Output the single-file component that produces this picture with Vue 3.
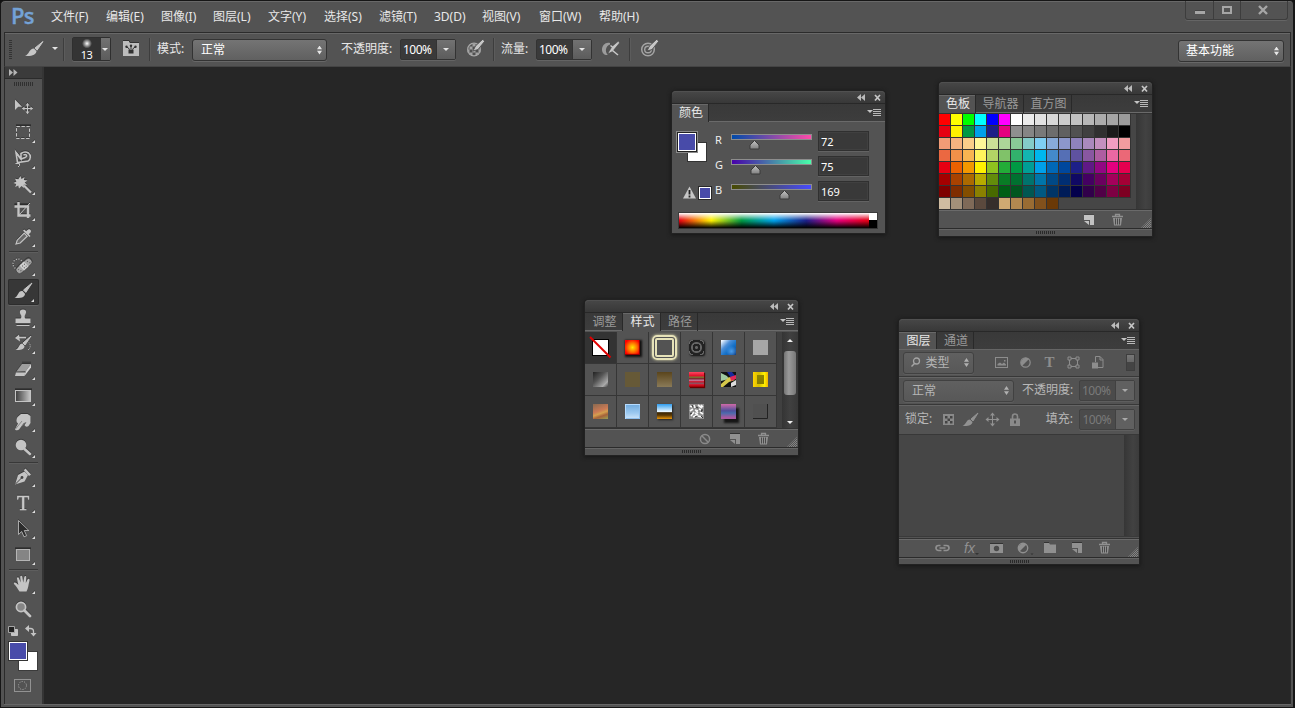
<script setup>
const menus = [
  ['文件(F)', 55], ['编辑(E)', 55], ['图像(I)', 52], ['图层(L)', 55], ['文字(Y)', 56], ['选择(S)', 55],
  ['滤镜(T)', 55], ['3D(D)', 48], ['视图(V)', 57], ['窗口(W)', 60], ['帮助(H)', 60],
]

const C = '#c4c4c4'
const toolIcons = {
  move: `<path d="M5 5.5V16l3.2-3.2H12z" fill="${C}"/><path d="M17.5 9.5v10M12.5 14.5h10" stroke="${C}" stroke-width="1"/><path d="M15.5 11.5l2-2.5 2 2.5zM15.5 17.5l2 2.5 2-2.5zM14.5 12.5l-2.5 2 2.5 2zM20.5 12.5l2.5 2-2.5 2z" fill="${C}"/>`,
  marquee: `<path d="M6 5.5h15" stroke="#2d2d2d"/><rect x="6.5" y="6.5" width="13" height="12" fill="none" stroke="${C}" stroke-dasharray="3.4 1.6"/>`,
  lasso: `<path d="M6 6.5l1.500 10L18 15c3-1.500 3-6 .5-8-2.500-1.500-5.500-1-7.500.5V13z" fill="none" stroke="${C}" stroke-width="1.600"/><path d="M11 13l-5-6.500M13.500 9c3-1.500 4.500 1.500 1.500 2.500l-4 1.500" fill="none" stroke="${C}" stroke-width="1.500"/><path d="M5.500 17.500h4v2l-1.500 1.500" fill="none" stroke="${C}"/>`,
  wand: `<path d="M10.500 4l1 3 3-2-.6 3 3.600.4-2.800 2.100 2.300 2.300-3.200-.1.200 3.200-2.500-2L9 16.500l-.8-3-3 1.500 1-3L3.500 11 6.400 9.500 5 6.700l3.300.5z" fill="${C}"/><path d="M14 13.500l7 7" stroke="${C}" stroke-width="2.200"/>`,
  crop: `<path d="M8.500 4v13.500h12M4.500 8.500h13.500V20" fill="none" stroke="${C}" stroke-width="2.400"/><path d="M9 17L20 5" stroke="${C}"/><path d="M4.500 6.500H7M10 6.500h8" stroke="#2d2d2d"/>`,
  eyedropper: `<path d="M6 20l1.200-3.800 7-7 3 3-7 6.800z" fill="#686868" stroke="${C}" stroke-width="1.200"/><path d="M13 6.500l6.500 6.500 1-1-1.700-1.900c2.500-2 2.500-3 1.800-4.100s-2.300-1.200-4.400 1.200L14.200 5.500z" fill="${C}"/>`,
  heal: `<circle cx="8" cy="11" r="5" fill="none" stroke="${C}" stroke-width="1.200" stroke-dasharray="1 1.600"/><g transform="rotate(-42 14 13)"><rect x="4.500" y="9.500" width="19" height="7" rx="3.400" fill="#a4a4a4" stroke="#2f2f2f" stroke-width=".6"/><rect x="11" y="9.500" width="6" height="7" fill="#d0d0d0"/><path d="M12.500 12h1m1.500 0h1m-3.500 2.500h1m1.500 0h1M7 12h1m1 2.500H8M19 12h1m1 2.500h-1" stroke="#555"/></g>`,
  brush: `<path d="M22 4l-8.500 7 2.300 2.400z" fill="${C}" stroke="${C}"/><path d="M12.500 12l2.500 2.700c0 3-3 4.800-10.500 4.300 4-1.700 3.300-7.500 8-7z" fill="${C}"/>`,
  stamp: `<path d="M13 4.500c-4 0-3.500 3.500-2 5.500.5 1 .5 3-.5 3.500H5.500v4.500h15v-4.500h-5c-1-.5-1-2.500-.5-3.500 1.500-2 2-5.500-2-5.500z" fill="${C}"/><path d="M6.500 20.500h13" stroke="${C}"/>`,
  history: `<path d="M21 5l-8 7 2 2z" fill="${C}" stroke="${C}"/><path d="M12.500 12.500l2 2.500c0 3-3 4.300-9 4 4-1.500 3-6.500 7-6.500z" fill="${C}"/><path d="M16 6.500H9" stroke="${C}" stroke-width="1.600"/><path d="M9 3.500L5 7l5 3.500z" fill="${C}"/><path d="M18 19c2.500-2 3-5 1-7.500" fill="none" stroke="${C}" stroke-dasharray="1 1"/>`,
  eraser: `<path d="M6 15l6-8h9l-5.500 7.500z" fill="#9e9e9e"/><path d="M6 15h9.500L14.500 19H5z" fill="#c4c4c4"/><path d="M15.500 14.500L21 7v3.500L14.500 19z" fill="#d4d4d4"/><path d="M12 6h9M6 15l9.500 0" stroke="#333" stroke-width=".8"/>`,
  gradient: `<path d="M5 6.500h17" stroke="#2d2d2d"/><rect x="5.500" y="7.500" width="15" height="11" fill="url(#toolRamp)" stroke="${C}"/>`,
  smudge: `<path d="M5 20l3-5.500C6 13 6 10.500 7.500 8L11 5h6.500l3 2v7l-2 3c-2 1.500-3 .5-4-1l2-3-3 1.500L9 20.500c-1 1.300-4 1-4-.5z" fill="${C}"/><path d="M12 12l-6.500 8M15 13.500L12 17" stroke="#777" stroke-width=".8"/>`,
  dodge: `<circle cx="11" cy="10" r="5.300" fill="${C}"/><path d="M14.500 14l5.500 5" stroke="${C}" stroke-width="2.500" stroke-linecap="round"/>`,
  pen: `<path d="M5 20.500l3-9.500 6.500-3.500L18 11l-3.500 6.500z" fill="${C}"/><path d="M5.500 20l6.500-6.500" stroke="#444"/><circle cx="12" cy="13.500" r="1.400" fill="#444"/><path d="M15.500 4.500l5.500 6-2 1.500-5.200-5.700z" fill="${C}"/>`,
  arrow: `<path d="M8.500 4.500v14l3.200-3 2.300 5.300 2.700-1.100-2.400-5.200h4.600z" fill="#2c2c2c" stroke="#b8b8b8" stroke-width=".9"/>`,
  rect: `<path d="M5 6.500h16" stroke="#2d2d2d"/><rect x="6.500" y="7.500" width="13" height="11" fill="#858585" stroke="#b5b5b5"/>`,
  hand: `<path d="M9.500 20.500c-2-2.500-3-5.500-5.500-7.500-.6-1.500 1.200-1.900 2.600-.7l1.800 1.600L7 7.700c-.2-1.700 1.600-2 2-.5l1.700 4.300-.5-5.500c0-1.800 2-1.800 2.200 0l.8 5.500 1-5.300c.4-1.600 2.200-1.400 2 .4l-.4 5.400 1.700-3.500c.8-1.400 2.400-.7 2 .9-1 4-1 7-3 11z" fill="${C}"/>`,
  zoom: `<circle cx="11" cy="10" r="4.600" fill="#858585" stroke="${C}" stroke-width="1.700"/><path d="M14.500 13.500l5.500 5.500" stroke="${C}" stroke-width="2.800" stroke-linecap="round"/>`,
}
const groups = [
  ['move', 'marquee', 'lasso', 'wand', 'crop', 'eyedropper'],
  ['heal', 'brush', 'stamp', 'history', 'eraser', 'gradient', 'smudge', 'dodge'],
  ['pen', 'type', 'arrow', 'rect'],
  ['hand', 'zoom'],
]
const hasFlyout = (t) => t !== 'move' && t !== 'zoom'

const channels = [
  { n: 'R', v: 72, from: '#004ba9', to: '#ff4ba9' },
  { n: 'G', v: 75, from: '#4800a9', to: '#48ffa9' },
  { n: 'B', v: 169, from: '#484b00', to: '#484bff' },
]
const swatches = `
ff0000 ffff00 00ff00 00ffff 0000ff ff00ff ffffff ebebeb e1e1e1 d7d7d7 cccccc c2c2c2 b7b7b7 acacac a5a5a5 9b9b9b
e60012 fff100 009944 00a0e9 1d2088 e4007f 8f8f8f 858585 797979 6d6d6d 606060 515151 404040 303030 1a1a1a 000000
f29b76 f6b37f facd89 fff799 cce198 acd598 89c997 84ccc9 7ecef4 88abda 8c97cb 8f82bc aa89bd c490bf f19ec2 f29c9f
eb6841 f19149 f8b551 fff45c b3d465 80c269 32b16c 13b5b1 00b7ee 448aca 556fb5 5f52a0 8957a1 ae5da1 ea68a2 eb6877
e60012 eb6100 f39800 fff100 8fc31f 22ac38 009944 009e96 00a0e9 0068b7 00479d 1d2088 601986 920783 e4007f e5004f
a40000 a84200 ac6a00 b7aa00 638c0b 097c25 007130 00736d 0075a9 004986 002e73 100964 440062 6a005f a4005b a40035
7d0000 7f2d00 834e00 8a8000 486a00 005e15 00561f 005752 005982 003567 001c58 03004c 31004a 500047 7e0043 7d0022
cfbca1 a39079 7f6a58 5b493d 362e2b cfa972 b28850 996c33 81511c 6a3906`.trim().split(/\s+/)

const footerIcons = {
  link: '<path d="M6.500 5.500h-2a2.500 2.500 0 0 0 0 5h3M9.500 5.500h3a2.500 2.500 0 0 1 0 5h-3M5.500 8h6" fill="none" stroke="#909090" stroke-width="1.700"/>',
  mask: '<path d="M2 3.500h13" stroke="#333"/><path d="M2 4h13v9H2z" fill="#909090"/><circle cx="8.500" cy="8.500" r="2.700" fill="#4a4a4a"/>',
  adjust: '<circle cx="8" cy="8" r="4.700" fill="none" stroke="#909090" stroke-width="1.400"/><path d="M4.500 11.500l7-7a5 5 0 0 0-7 7z" fill="#909090"/><path d="M15.500 13.500h3l-1.500 1.500z" fill="#333"/>',
  folder: '<path d="M2 3h5l1 1.500h6V13H2z" fill="#909090"/><path d="M2 2.500h5" stroke="#333"/>',
  page: '<path d="M3 3h10v10H9V8H3z" fill="#909090"/><path d="M3 9h5v4z" fill="#909090"/><path d="M3 2.500h10" stroke="#333"/>',
  trash: '<path d="M3 4.500h11M6.500 4V2.500h4V4" fill="none" stroke="#909090" stroke-width="1.300"/><path d="M4 6h9l-1 7.500H5z" fill="#909090"/><path d="M6.500 6.500v6M8.500 6.500v6M10.500 6.500v6" stroke="#4a4a4a"/>',
  none: '<circle cx="8" cy="8" r="4.600" fill="none" stroke="#8a8a8a" stroke-width="1.500"/><path d="M4.800 4.800l6.400 6.400" stroke="#8a8a8a" stroke-width="1.500"/>',
}
const filters = {
  image: '<rect x="1.500" y="2.500" width="12" height="10" fill="none" stroke="#8d8d8d"/><path d="M3.500 10.500V9L6 7.500l2 1.500 2-1.500 2 2v1z" fill="#8d8d8d"/><path d="M10 5h1.500v1.500H10z" fill="#8d8d8d"/>',
  adjust: '<circle cx="7.500" cy="7.500" r="4.700" fill="none" stroke="#8d8d8d" stroke-width="1.200"/><path d="M4 11l7-7a5 5 0 0 0-7 7z" fill="#8d8d8d"/>',
  type: '',
  shape: '<rect x="3.500" y="3.500" width="8" height="8" fill="none" stroke="#8d8d8d"/><path d="M2 2h3v3H2zM10 2h3v3h-3zM2 10h3v3H2zM10 10h3v3h-3z" fill="#555" stroke="#8d8d8d"/>',
  smart: '<path d="M5.500 7V1.500H10l3 3v8H8" fill="none" stroke="#8d8d8d"/><path d="M10 1.500v3.500h3" fill="none" stroke="#8d8d8d"/><path d="M2 7.500h6v6H2z" fill="#8d8d8d"/>',
}
const layersIcons = ['link', 'fx', 'mask', 'adjust', 'folder', 'page', 'trash']
</script>

<template>
  <div class="app">
    <svg class="defs" width="0" height="0">
      <defs>
        <linearGradient id="toolRamp"><stop offset="0" stop-color="#3c3c3c" /><stop offset="1" stop-color="#c8c8c8" /></linearGradient>
        <radialGradient id="spray"><stop offset="0" stop-color="#fff" /><stop offset=".4" stop-color="#aaa" /><stop offset="1" stop-color="#343434" /></radialGradient>
        <linearGradient id="thumb" x2="0" y2="1"><stop offset="0" stop-color="#c4c4c4" /><stop offset="1" stop-color="#808080" /></linearGradient>
      </defs>
    </svg>

    <header class="menubar">
      <span class="logo">Ps</span>
      <nav class="menus">
        <span v-for="[m, w] in menus" :key="m" :style="{ width: w + 'px' }">{{ m }}</span>
      </nav>
      <div class="winctl">
        <span class="min"><i></i></span>
        <span class="max"><i></i></span>
        <span class="close"><svg width="12" height="10"><path d="M2 1l8 8M10 1L2 9" stroke="#a6a6a6" stroke-width="2.400" /></svg></span>
      </div>
    </header>

    <section class="options">
      <i class="grip-v"></i>
      <svg class="o-brush" width="20" height="18"><path d="M18 1.500L10 8l2 2.200z" fill="#c6c6c6" stroke="#c6c6c6" /><path d="M9 8.500l2.500 2.700C11 14.500 7.500 16.500 0 16c4.500-1.700 4-7.500 9-7.500z" fill="#c6c6c6" /></svg>
      <i class="caret first"></i>
      <i class="vsep s1"></i>
      <div class="preset">
        <div class="preview"><svg width="12" height="11"><circle cx="6" cy="5.500" r="5" fill="url(#spray)" /></svg><b>13</b></div>
        <div class="drop"><i class="caret"></i></div>
      </div>
      <svg class="o-panel" width="17" height="17"><path d="M0 1h6l1 2h9v13H0z" fill="#bdbdbd" /><path d="M0 .5h6l1 2h9" fill="none" stroke="#333" /><path d="M3.500 7l2 1 1.500 3M8 6v5M12.500 7l-2 1L9 11" stroke="#333" fill="none" /><circle cx="8" cy="5.800" r="1.200" fill="#333" /><circle cx="3.500" cy="6.700" r="1.200" fill="#333" /><circle cx="12.500" cy="6.700" r="1.200" fill="#333" /><path d="M5.500 10h5v3.500h-5z" fill="#333" /></svg>
      <i class="vsep s2"></i>
      <span class="lbl l1">模式:</span>
      <div class="select mode"><span>正常</span><i class="updown"></i></div>
      <span class="lbl l2">不透明度:</span>
      <div class="field"><span>100%</span><div class="drop"><i class="caret"></i></div></div>
      <svg class="o-i1" width="20" height="20">
        <circle cx="8" cy="11.500" r="6.300" fill="#505050" stroke="#a6a6a6" stroke-width="1.300" />
        <path d="M6.500 5.500h3v3h-3zM3.500 8.500h3v3h-3zM9.500 8.500h3v3h-3zM6.500 11.500h3v3h-3zM1.500 11.500h2v3h-2zM12.500 11.500h2v3h-2zM3.500 14.500h3v2.500h-3zM9.500 14.500h3v2.500h-3z" fill="#a2a2a2" />
        <path d="M17 1L9.500 8 7 13l5-1.500 6.500-8z" fill="#c6c6c6" stroke="#484848" stroke-width=".8" />
      </svg>
      <i class="vsep s3"></i>
      <span class="lbl l3">流量:</span>
      <div class="field"><span>100%</span><div class="drop"><i class="caret"></i></div></div>
      <svg class="o-i2" width="20" height="20">
        <path d="M9 4C5 2.500 1 6 1 10.500c0 3.500 2.500 6 6 5.500C3.500 13 4.500 7 9 5.500z" fill="#9c9c9c" />
        <path d="M17.500 2L11 7.500 6.500 15l5-2.500 7-8.500z" fill="#c6c6c6" stroke="#484848" stroke-width=".6" /><path d="M11.500 11.500L17 16M9.500 6.500l2.500 2" stroke="#c6c6c6" stroke-width="1.600" />
      </svg>
      <i class="vsep s4"></i>
      <svg class="o-i3" width="20" height="20">
        <circle cx="8" cy="11.500" r="6.300" fill="none" stroke="#a4a4a4" stroke-width="1.500" /><circle cx="8" cy="11.500" r="3.300" fill="none" stroke="#a4a4a4" stroke-width="1.400" />
        <path d="M17 1L9.500 8 7 13l5-1.500 6.500-8z" fill="#c6c6c6" stroke="#484848" stroke-width=".8" />
      </svg>
      <div class="select workspace"><span>基本功能</span><i class="updown"></i></div>
    </section>

    <main class="desk">
      <aside class="toolbox">
        <div class="tb-head"><svg width="9" height="7"><path d="M0 0l4 3.500L0 7zM4.500 0l4 3.500-4 3.500z" fill="#b5b5b5" /></svg></div>
        <i class="grip-h"></i>
        <div v-for="(g, gi) in groups" :key="gi" class="group">
          <div v-for="t in g" :key="t" class="tool" :class="{ active: t === 'brush' }">
            <b v-if="t === 'type'" class="glyph">T</b>
            <svg v-else width="26" height="26" v-html="toolIcons[t]"></svg>
            <i v-if="hasFlyout(t)" class="fly"></i>
          </div>
        </div>
        <div class="mini">
          <svg width="12" height="12"><path d="M4.500 4.500h6v6h-6z" fill="#c4c4c4" stroke="#c4c4c4" /><path d="M1.500 1.500h6v6h-6z" fill="#222" stroke="#a5a5a5" /></svg>
          <svg width="12" height="12"><path d="M3 3.500h2.500q3 0 3 3V9" fill="none" stroke="#c4c4c4" stroke-width="1.300" /><path d="M4 0v7L0 3.500zM5.500 8h6L8.500 11.500z" fill="#c4c4c4" /></svg>
        </div>
        <div class="fgbg"><i class="bg"></i><i class="fg"></i></div>
        <svg class="quick" width="18" height="14"><rect x=".5" y=".5" width="16" height="12" fill="none" stroke="#929292" /><circle cx="8.500" cy="6.500" r="4" fill="none" stroke="#a8a8a8" stroke-dasharray="1.100 1.400" /></svg>
      </aside>

      <!-- Color -->
      <section class="panel p-color">
        <div class="p-head"><svg width="25" height="8"><path d="M4 0v7L0 3.500zM8 0v7L4 3.500z" fill="#bbb" /><path d="M18 1l5 5.500M23 1l-5 5.500" stroke="#c6c6c6" stroke-width="1.700" /></svg></div>
        <div class="tabs"><span class="on w36">颜色</span><i class="pmenu"></i></div>
        <div class="c-body">
          <div class="c-main">
            <div class="c-left">
              <div class="c-sw"><i class="bg"></i><i class="fg"></i></div>
              <div class="warn"><svg width="13" height="13"><path d="M6.500.5L13 12.500H0z" fill="#c6c6c6" /><path d="M6.500 4v4.500M6.500 9.500v2" stroke="#222" stroke-width="1.800" /></svg><i></i></div>
            </div>
            <div class="c-rows">
              <div v-for="c in channels" :key="c.n" class="c-row">
                <span>{{ c.n }}</span>
                <div class="track">
                  <i class="ramp" :style="{ background: `linear-gradient(90deg, ${c.from}, ${c.to})` }"></i>
                  <svg width="11" height="10" :style="{ marginLeft: Math.round((c.v / 255) * 79) - 4 + 'px' }"><path d="M5.500 .5l4.500 4.500v4H1V5z" fill="url(#thumb)" stroke="#3a3a3a" /></svg>
                </div>
                <b>{{ c.v }}</b>
              </div>
            </div>
          </div>
          <div class="spectrum"><div class="hues"></div><div class="bw"></div></div>
        </div>
      </section>

      <!-- Swatches -->
      <section class="panel p-swatch">
        <div class="p-head"><svg width="25" height="8"><path d="M4 0v7L0 3.500zM8 0v7L4 3.500z" fill="#bbb" /><path d="M18 1l5 5.500M23 1l-5 5.500" stroke="#c6c6c6" stroke-width="1.700" /></svg></div>
        <div class="tabs"><span class="on w36">色板</span><span class="w48">导航器</span><span class="w48">直方图</span><i class="pmenu"></i></div>
        <div class="s-body">
          <div class="s-grid"><i v-for="(s, i) in swatches" :key="i" :style="{ background: '#' + s }"></i></div>
          <i class="rail"></i>
        </div>
        <div class="p-foot">
          <svg class="lit" width="17" height="16" v-html="footerIcons.page"></svg>
          <svg class="gap12" width="17" height="16" v-html="footerIcons.trash"></svg>
          <i class="resize"></i>
        </div>
        <div class="p-bar"><i></i></div>
      </section>

      <!-- Styles -->
      <section class="panel p-style">
        <div class="p-head"><svg width="25" height="8"><path d="M4 0v7L0 3.500zM8 0v7L4 3.500z" fill="#bbb" /><path d="M18 1l5 5.500M23 1l-5 5.500" stroke="#c6c6c6" stroke-width="1.700" /></svg></div>
        <div class="tabs"><span class="w37">调整</span><span class="on w37">样式</span><span class="w36">路径</span><i class="pmenu"></i></div>
        <div class="y-body">
          <div class="y-grid">
            <div v-for="n in 18" :key="n" :class="{ dark: n === 1 }">
              <svg v-if="n === 1" width="23" height="23"><rect x="3.500" y="3.500" width="16" height="16" fill="#fff" stroke="#000" /><path d="M1 1l20.500 20.500" stroke="#e00000" stroke-width="2" /></svg>
              <svg v-else-if="n === 18" width="17" height="17"><path d="M1 1h14v14H1z" fill="#505050" /><path d="M15.500 1v14.500H1" fill="none" stroke="#222" /></svg>
              <svg v-else-if="n === 11" width="15" height="15"><path d="M0 0h15v15H0z" fill="#111" /><path d="M0 1l6 3 2 3-8 2z" fill="#9fc9a0" /><path d="M6 0h5l4 5-5 1z" fill="#182a9c" /><path d="M0 12l8-7 6 3-6 2-6 5H0z" fill="#d6c84b" /><path d="M9 5l6-2v4l-5 2z" fill="#e02858" /><path d="M10 11l5-3v5l-5 2z" fill="#ddd" /></svg>
              <svg v-else-if="n === 16" width="15" height="15"><path d="M0 0h15v15H0z" fill="#8b8b8b" /><path d="M1 2l2 1M5 1l1 3M9 1l4 3M12 1l2 2M1 7l3-2M6 6l3 1M2 12l3-4M4 13l4-2M9 12l4 1M11 8l3 2M6 9l3 2M10 5l2 1M7 7l2 2" stroke="#f8f8f8" stroke-width="1.600" /><path d="M3 1l1 2M7 3l2 1M1 10l2-1M6 13l2-1M12 8l1-2M13 5v2M12 12l2 2" stroke="#333" /></svg>
              <i v-else :class="'t' + n"></i>
            </div>
          </div>
          <div class="scroll"><i class="up"></i><i class="knob"></i><i class="down"></i></div>
        </div>
        <div class="p-foot">
          <svg width="17" height="16" v-html="footerIcons.none"></svg>
          <svg class="gap14" width="17" height="16" v-html="footerIcons.page"></svg>
          <svg class="gap12" width="17" height="16" v-html="footerIcons.trash"></svg>
          <i class="resize"></i>
        </div>
        <div class="p-bar"><i></i></div>
      </section>

      <!-- Layers -->
      <section class="panel p-layer">
        <div class="p-head"><svg width="25" height="8"><path d="M4 0v7L0 3.500zM8 0v7L4 3.500z" fill="#bbb" /><path d="M18 1l5 5.500M23 1l-5 5.500" stroke="#c6c6c6" stroke-width="1.700" /></svg></div>
        <div class="tabs"><span class="on w37">图层</span><span class="w36">通道</span><i class="pmenu"></i></div>
        <div class="l-row r1">
          <div class="select dim kind"><svg width="11" height="11"><circle cx="6.500" cy="4" r="3" fill="none" stroke="#a4a4a4" stroke-width="1.300" /><path d="M4.500 6.500L1.500 9.500" stroke="#a4a4a4" stroke-width="1.500" /></svg><span>类型</span><i class="updown"></i></div>
          <div class="filters">
            <template v-for="(p, k) in filters" :key="k">
              <b v-if="k === 'type'">T</b>
              <svg v-else width="15" height="15" v-html="p"></svg>
            </template>
          </div>
          <i class="toggle"></i>
        </div>
        <div class="l-row">
          <div class="select dim blend"><span>正常</span><i class="updown"></i></div>
          <span class="lbl">不透明度:</span>
          <div class="field dim"><span>100%</span><div class="drop"><i class="caret"></i></div></div>
        </div>
        <div class="l-row r3">
          <span class="lbl lock">锁定:</span>
          <svg class="locks" width="95" height="18">
            <path d="M1 3h11v11H1z" fill="#8a8a8a" /><path d="M3 5h2.500v2.500H3zM8 5h2.500v2.500H8zM5.500 7.500H8V10H5.500zM3 10h2.500v2.500H3zM8 10h2.500v2.500H8z" fill="#444" />
            <path d="M36 2l-7 6 2 2z" fill="#929292" stroke="#929292" /><path d="M28 8.500l2.500 2.500c-.5 3-4 4.500-10 4 4-1.500 3.500-6.500 7.500-6.500z" fill="#929292" />
            <path d="M50.500 3v11M45 8.500h11" stroke="#929292" /><path d="M48 4.500L50.500 1.500 53 4.500zM48 12.500l2.500 3 2.500-3zM46.500 6l-3 2.500 3 2.500zM54.500 6l3 2.500-3 2.500z" fill="#929292" />
            <path d="M70.500 8V5.500a2.500 2.500 0 0 1 5 0V8" fill="none" stroke="#8a8a8a" stroke-width="1.600" /><path d="M68 7.500h10V15H68z" fill="#8a8a8a" /><path d="M73 9.500v3" stroke="#444" stroke-width="1.600" />
          </svg>
          <span class="lbl fill">填充:</span>
          <div class="field dim"><span>100%</span><div class="drop"><i class="caret"></i></div></div>
        </div>
        <div class="l-list"><i class="rail"></i></div>
        <div class="p-foot l-foot">
          <template v-for="k in layersIcons" :key="k">
            <span v-if="k === 'fx'" class="fx">fx<svg width="4" height="3"><path d="M0 0h4L2 2z" fill="#333" /></svg></span>
            <svg v-else width="17" height="16" v-html="footerIcons[k]"></svg>
          </template>
          <i class="resize"></i>
        </div>
        <div class="p-bar"><i></i></div>
      </section>
    </main>
  </div>
</template>

<style>
body { background: #535353; overflow: hidden; }
</style>

<style scoped>
.app { box-sizing: border-box; width: 1295px; height: 708px; background: #535353; border: 1px solid #161616; border-right-width: 2px; border-radius: 5px 5px 0 0; box-shadow: inset 0 1px #686868, 0 0 0 5px #111; font: 12px/14px "Noto Sans", "Noto Sans CJK SC", sans-serif; color: #e4e4e4; overflow: hidden; display: flex; flex-direction: column; }
.app * { box-sizing: border-box; }
.app i { display: block; font-style: normal; flex: none; }
.app svg { display: block; flex: none; }
.app .defs { position: absolute; }

.menubar { height: 31px; display: flex; flex: none; }
.logo { width: 50px; padding-left: 10px; font: 600 22px/28px "Open Sans", sans-serif; color: #74a2d6; letter-spacing: -.8px; -webkit-text-stroke: .3px #74a2d6; }
.menus { display: flex; flex: 1; font-size: 12px; line-height: 32px; color: #e8e8e8; white-space: nowrap; }
.winctl { width: 103px; height: 19px; margin-right: 5px; border: 1px solid #3d3d3d; border-top: 0; border-radius: 0 0 3px 3px; display: flex; box-shadow: 0 1px #656565; }
.winctl span { display: flex; align-items: center; justify-content: center; }
.winctl span + span { border-left: 1px solid #3d3d3d; }
.min { width: 27px; }
.max { width: 27px; }
.close { flex: 1; padding-right: 2px; }
.min i { width: 10px; height: 4px; background: #a6a6a6; margin-top: 4px; border-top: 1px solid #444; }
.max i { width: 10px; height: 8px; border: 2px solid #a6a6a6; }

.options { height: 35px; flex: none; margin: 0 2px 0 3px; border: 1px solid #2b2b2b; border-bottom-color: #444; box-shadow: inset 0 1px #686868; display: flex; align-items: flex-start; padding-top: 5px; }
.grip-v { width: 3px; height: 19px; margin: 2px 0 0 4px; background: repeating-linear-gradient(#333 0 1px, transparent 1px 2px); }
.o-brush { margin: 2px 0 0 13px; }
.caret { width: 0; height: 0; border: 3px solid transparent; border-top-color: #e4e4e4; border-bottom: 0; }
.caret.first { margin: 9px 0 0 7px; }
.vsep { width: 1px; height: 23px; background: #3d3d3d; box-shadow: 1px 0 #5c5c5c; }
.s1 { margin-left: 5px; }
.preset { display: flex; margin: -1px 0 0 8px; height: 24px; width: 39px; border: 1px solid #2f2f2f; border-radius: 2px; box-shadow: 0 1px #646464; }
.preview { width: 27px; background: #343434; display: flex; flex-direction: column; align-items: center; }
.preview b { font: 11px/11px "Noto Sans", sans-serif; color: #fff; letter-spacing: -.5px; }
.drop { flex: 1; background: linear-gradient(#727272, #5c5c5c); border-left: 1px solid #333; display: flex; align-items: center; justify-content: center; }
.preset .drop { padding-right: 1px; }
.o-panel { margin: 2px 0 0 12px; }
.s2 { margin-left: 9px; }
.lbl { white-space: nowrap; color: #e8e8e8; line-height: 22px; }
.l1 { margin-left: 7px; width: 34px; }
.select { height: 22px; border: 1px solid #333; border-radius: 3px; background: linear-gradient(#747474, #606060); box-shadow: 0 1px #676767; display: flex; align-items: center; justify-content: space-between; padding: 0 4px 0 8px; color: #fff; }
.options .select { margin-top: 1px; }
.updown { width: 5px; height: 9px; background: linear-gradient(#e6e6e6, #e6e6e6); clip-path: polygon(50% 0, 100% 42%, 0 42%, 0 58%, 100% 58%, 50% 100%, 0 58%, 0 42%); }
.mode { width: 135px; margin-left: 1px; }
.l2 { margin-left: 14px; width: 59px; }
.field { width: 56px; height: 21px; margin-top: 1px; border: 1px solid #333; border-radius: 2px; background: #3a3a3a; display: flex; color: #fff; box-shadow: 0 1px #646464; font-size: 12px; line-height: 19px; }
.field > span { width: 35px; padding-left: 2px; letter-spacing: -.5px; }
.o-i1 { margin: 0 0 0 10px; }
.s3 { margin-left: 7px; }
.l3 { margin-left: 7px; width: 35px; }
.o-i2 { margin: 1px 0 0 9px; }
.s4 { margin-left: 8px; }
.o-i3 { margin-left: 10px; }
.options .workspace { width: 106px; margin: 2px 6px 0 auto; padding: 0 4px 0 7px; }

.desk { position: relative; flex: 1; margin: 0 2px 3px 3px; background: #262626; border: 1px solid #2b2b2b; border-width: 0 1px; box-shadow: 0 1px #666; }
.toolbox { width: 39px; height: 637px; background: #535353; border-right: 2px solid #353535; display: flex; flex-direction: column; }
.tb-head { height: 12px; flex: none; background: #3b3b3b; padding: 2px 0 0 4px; border-bottom: 1px solid #2b2b2b; }
.grip-h { width: 20px; height: 4px; margin: 3px 0 8px 9px; background: repeating-linear-gradient(90deg, #303030 0 1px, transparent 1px 2px); }
.group + .group { border-top: 1px solid #383838; margin: 1px 4px 0 4px; box-shadow: inset 0 1px #5e5e5e; padding-top: 1px; }
.grip-h + .group { margin: 0 4px 0 4px; }
.tool { position: relative; height: 26px; width: 30px; padding-left: 1px; filter: drop-shadow(0 -1px #3a3a3a); }
.tool.active { margin-left: -1px; width: 31px; padding-left: 2px; background: #373737; box-shadow: inset 0 0 0 1px #2d2d2d, 0 1px #666; border-radius: 2px; filter: none; }
.tool .glyph { display: block; width: 26px; text-align: center; font: 20px/26px "Liberation Serif", serif; color: #c8c8c8; -webkit-text-stroke: .5px #c8c8c8; }
.fly { position: absolute; left: 23px; bottom: 3px; width: 3px; height: 3px; background: #dedede; clip-path: polygon(100% 0, 100% 100%, 0 100%); }
.mini { display: flex; gap: 6px; margin: 2px 0 0 2px; }
.fgbg { position: relative; width: 30px; height: 29px; margin: 5px 0 0 3px; }
.fgbg .fg { position: absolute; left: 1px; top: 0; width: 18px; height: 18px; background: #484ba9; border: 1px solid #fff; box-shadow: 0 0 0 1px #333; }
.fgbg .bg { position: absolute; left: 11px; top: 10px; width: 18px; height: 18px; background: #fff; box-shadow: 0 0 0 1px #3b3b3b; }
.quick { margin: 8px 0 0 9px; }

.panel { position: absolute; background: #535353; border-radius: 4px 4px 0 0; box-shadow: 0 0 0 1px #222, 0 1px 4px 1px #161616; display: flex; flex-direction: column; }
.p-head { height: 12px; flex: none; background: linear-gradient(#464646, #383838); border-radius: 4px 4px 0 0; border-top: 1px solid #505050; display: flex; justify-content: flex-end; padding: 2px 3px 0 0; }
.tabs { height: 19px; flex: none; background: linear-gradient(#393939, #3d3d3d); border-top: 1px solid #282828; box-shadow: inset 0 -1px #6a6a6a; display: flex; color: #999; }
.tabs span { border-right: 1px solid #292929; text-align: center; line-height: 18px; padding-left: 2px; }
.tabs .on { background: #535353; color: #e8e8e8; box-shadow: inset 0 1px #686868; }
.w36 { width: 37px; } .w37 { width: 38px; } .w48 { width: 48px; }
.pmenu { position: relative; width: 8px; height: 7px; margin: 5px 4px 0 auto; background: repeating-linear-gradient(#b8b8b8 0 1px, #3a3a3a 1px 2px); }
.pmenu::before { content: ""; position: absolute; left: -6px; top: 1px; border: 3px solid transparent; border-top-color: #c4c4c4; border-bottom: 0; }
.p-foot { height: 18px; flex: none; border-top: 1px solid #6a6a6a; box-shadow: 0 -1px #333; display: flex; justify-content: flex-end; align-items: flex-start; padding-top: 1px; }
.resize { width: 10px; height: 10px; margin: 6px 1px 0 15px; background: repeating-conic-gradient(#858585 0 25%, transparent 0 50%) 0 0/2px 2px; clip-path: polygon(100% 0, 100% 100%, 0 100%); }
.gap12 { margin-left: 11px; } .gap14 { margin-left: 13px; }
.lit { filter: brightness(1.35); }
.p-bar { flex: 1; border-top: 1px solid #2b2b2b; box-shadow: inset 0 1px #656565; }
.p-bar i { width: 19px; height: 3px; margin: 2px auto 0; background: repeating-linear-gradient(90deg, #292929 0 1px, transparent 1px 2px); }
.rail { width: 16px; background: linear-gradient(90deg, #363636, #424242 60%, #3b3b3b); }

.p-color { left: 667px; top: 24px; width: 213px; height: 142px; }
.c-body { flex: 1; padding: 0 6px 4px 4px; }
.c-main { display: flex; height: 90px; }
.c-left { width: 38px; }
.c-sw { position: relative; height: 64px; }
.c-sw .fg { position: absolute; left: 2px; top: 11px; width: 18px; height: 18px; background: #484ba9; border: 1px solid #fff; box-shadow: 0 0 0 1px #222, 0 0 0 2px #8a8a8a; }
.c-sw .bg { position: absolute; left: 12px; top: 21px; width: 18px; height: 18px; background: #fff; box-shadow: 0 0 0 1px #333; }
.warn { display: flex; margin-left: 7px; gap: 3px; }
.warn i { width: 12px; height: 12px; background: #484ba9; border: 1px solid #fff; outline: 1px solid #292929; margin-top: 1px; }
.c-rows { padding-top: 9px; }
.c-row { display: flex; height: 25px; }
.c-row > span { width: 17px; padding: 2px 0 0 1px; font-size: 11px; color: #eee; }
.track { width: 87px; padding-top: 3px; }
.ramp { width: 81px; height: 6px; border: 1px solid #8d8d8d; }
.track svg { margin-top: 0; }
.c-row b { width: 51px; height: 20px; border: 1px solid #303030; box-shadow: 0 1px #636363, inset 0 0 0 1px #404040; background: #393939; font: 11px/19px "Noto Sans", sans-serif; padding-left: 2px; color: #fff; }
.spectrum { display: flex; margin-left: 2px; width: 200px; height: 17px; border: 1px solid #3b3b3b; border-bottom-color: #333; }
.hues { flex: 1; background: linear-gradient(#fff, rgba(255,255,255,0) 48%, rgba(0,0,0,0) 52%, #000), linear-gradient(90deg, #e60012, #fff100 17%, #009944 33%, #00a0e9 50%, #1d2088 67%, #e4007f 83%, #e60012); }
.bw { width: 8px; background: linear-gradient(#fff 50%, #000 50%); }

.p-swatch { left: 934px; top: 15px; width: 213px; height: 154px; }
.s-body { height: 96px; display: flex; justify-content: space-between; background: #464646; margin-top: 1px; box-shadow: 0 -1px #333; }
.s-grid { display: grid; grid-template-columns: repeat(16, 12px); grid-auto-rows: 12px; height: 96px; background: linear-gradient(#333, #333) 0 0/192px 84px no-repeat, linear-gradient(#333, #333) 0 84px/120px 12px no-repeat; }
.s-grid i { margin: 0 1px 1px 0; }

.p-style { left: 580px; top: 233px; width: 213px; height: 155px; }
.y-body { height: 97px; display: flex; justify-content: space-between; background: #404040; margin-top: 1px; }
.y-grid { display: grid; grid-template-columns: repeat(6, 32px); grid-auto-rows: 32px; }
.y-grid > div { background: #535353; border: solid #363636; border-width: 0 1px 1px 0; display: flex; align-items: center; justify-content: center; }
.y-grid > .dark { background: #333; }
.y-grid i { width: 15px; height: 15px; }
.y-grid .t2 { background: radial-gradient(#ffe600, #ff7a00 40%, #f00 80%); box-shadow: 1px 1px 2px 1px #111, inset -1px -1px 1px #8a0000; }
.y-grid .t3 { width: 25px; height: 25px; border-radius: 5px; border: 5px double #e6e2b8; box-shadow: 0 0 3px #e2deae; }
.t4 { background: repeating-radial-gradient(circle at 50% 50%, #666 0 1px, #222 2px 4px); border-radius: 2px; box-shadow: 1px 1px 2px #111; }
.t5 { background: radial-gradient(circle at 70% 75%, #4b9be8, transparent 35%), linear-gradient(135deg, #f2f8ff 5%, #4d8fd8 35%, #1572c9 60%, #153d80); }
.t6 { background: #a6a6a6; }
.t7 { background: linear-gradient(135deg, #222, #555 40%, #aaa 80%, #444); }
.t8 { background: #665937; }
.t9 { background: linear-gradient(#5a451c, #8a7a58); }
.y-grid .t10 { background: linear-gradient(#ff4860, #e0102b 25%, #7a7a30 35%, #7c2030 45%, #c080a0 55%, #d01025 65%, #7e5c66 75%, #dc1028 85%, #900); box-shadow: 1px 1px 1px #600; }
.t12 { background: linear-gradient(#8f8500, #857b00) 4px 3px/7px 9px no-repeat, linear-gradient(90deg, #ffd400, #d6bc00 40%, #fff200 75%, #f0b400); }
.t13 { background: linear-gradient(160deg, #8a6a50, #cc7a55 45%, #d4a04e 60%, #a6623a 75%, #98a052); }
.t14 { background: linear-gradient(#6ea9dc, #9cc9f0 60%, #cfe5fa); box-shadow: inset 1px 1px #b5dbff, inset -1px -1px #8fc0ee; }
.y-grid .t15 { background: linear-gradient(#2f9df0, #e8f6ff 50%, #3b2603 58%, #5c3a04 75%, #e89508); box-shadow: 1px 1px 2px #222; }
.y-grid .t17 { background: linear-gradient(#d06aa8, #50509c 45%, #4a6aac 60%, #a858a0 90%); box-shadow: 3px 4px 2px #161616; }
.scroll { width: 16px; background: linear-gradient(90deg, #343434, #404040 50%, #373737); display: flex; flex-direction: column; align-items: center; justify-content: space-between; padding: 7px 1px 5px 1px; }
.up, .down { width: 0; height: 0; border: 3px solid transparent; }
.up { border-bottom-color: #eee; border-top: 0; }
.down { border-top-color: #eee; border-bottom: 0; }
.knob { width: 12px; height: 44px; margin-bottom: 18px; border-radius: 3px; background: linear-gradient(90deg, #747474, #9a9a9a 40%, #777); }

.p-layer { left: 894px; top: 252px; width: 240px; height: 245px; }
.p-layer .tabs { box-shadow: none; }
.l-row { height: 28px; flex: none; display: flex; align-items: center; padding: 0 4px; border-bottom: 1px solid #383838; box-shadow: inset 0 1px #656565; }
.r1 { margin-top: -1px; }
.r3 { height: 30px; padding-bottom: 1px; }
.p-layer .select { background: linear-gradient(#606060, #585858); border-color: #414141; color: #b5b5b5; box-shadow: 0 1px #5e5e5e; }
.p-layer .select .updown { background: #b0b0b0; }
.kind { width: 71px; }
.p-layer .kind { padding-left: 6px; }
.kind span { margin-right: 10px; }
.blend { width: 111px; }
.p-layer .lbl { color: #b8b8b8; margin: -1px 0 0 8px; width: 57px; }
.p-layer .field { margin: 0; background: #4b4b4b; border-color: #414141; color: #7a7a7a; box-shadow: 0 1px #5e5e5e; }
.p-layer .drop { background: #606060; border-color: #414141; }
.p-layer .drop .caret { border-top-color: #aaa; }
.filters { display: flex; gap: 9px; margin-left: 20px; align-items: center; }
.filters b { width: 15px; text-align: center; font: bold 15px/15px "Liberation Serif", serif; color: #8d8d8d; }
.toggle { width: 9px; height: 17px; margin-left: auto; background: linear-gradient(#777, #686868 45%, #444 45%); border: 1px solid #3e3e3e; }
.p-layer .lbl.lock { margin-left: 2px; width: 36px; }
.p-layer .lbl.fill { margin-left: 9px; width: 34px; }
.l-row .locks { margin: 2px 0 0 1px; }
.l-list { height: 102px; background: #464646; display: flex; justify-content: flex-end; margin-bottom: 2px; border-bottom: 1px solid #3a3a3a; }
.l-list .rail { width: 15px; }
.l-foot { gap: 10px; padding-top: 0; }
.l-foot .resize { margin: 7px 1px 0 5px; }
.l-foot svg { overflow: visible; }
.fx { display: flex; align-items: flex-end; width: 17px; height: 16px; font: italic 14px/16px "Liberation Sans", sans-serif; color: #909090; padding-left: 3px; }
</style>
